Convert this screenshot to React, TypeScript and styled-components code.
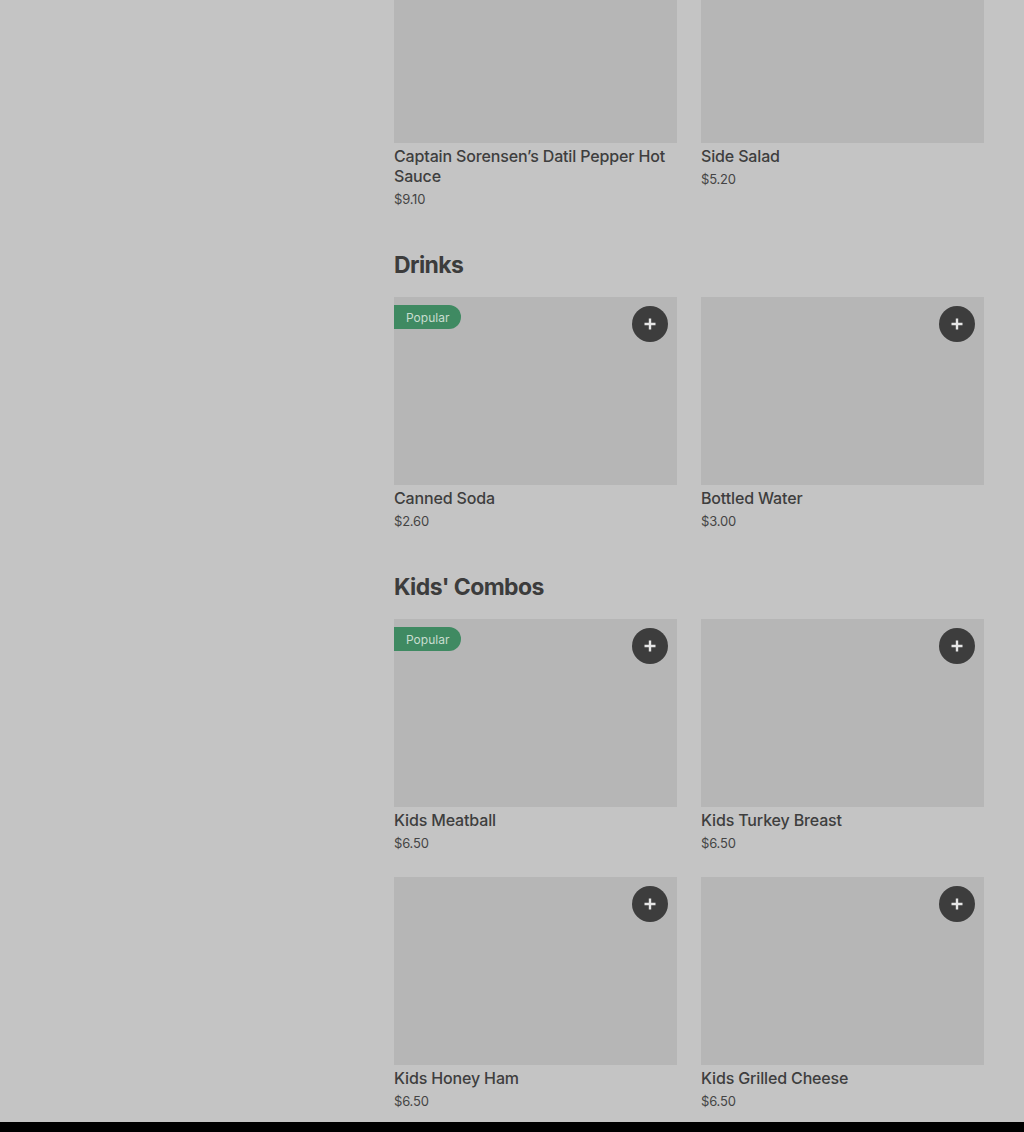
import React from "react";
import styled, { createGlobalStyle } from "styled-components";

const Global = createGlobalStyle`
  html, body { margin: 0; padding: 0; background: #c4c4c4; }
  body { font-family: Inter, "Noto Sans", "Liberation Sans", sans-serif; color: #3f3f3f; }
  * { box-sizing: border-box; }
`;

const Page = styled.div`
  width: 1024px;
  height: 1132px;
  overflow: hidden;
  background: #c4c4c4;
  display: flex;
  flex-direction: column;
`;

const Main = styled.main`
  flex: 1;
  overflow: hidden;
  padding: 0 40px 0 394px;
`;

const Scroll = styled.div`
  margin-top: -45px;
  display: flex;
  flex-direction: column;
`;

const Section = styled.section`
  display: flex;
  flex-direction: column;
  padding-bottom: 40px;
`;

const SectionTitle = styled.h2`
  margin: 0 0 16px;
  font-size: 23px;
  line-height: 32px;
  font-weight: 700;
  letter-spacing: -0.6px;
  color: #3c3c3c;
`;

const Grid = styled.div`
  display: grid;
  grid-template-columns: repeat(2, 283px);
  column-gap: 24px;
  row-gap: 24px;
`;

const Card = styled.div`
  display: flex;
  flex-direction: column;
`;

const Media = styled.div`
  position: relative;
  height: 188px;
  background: #b6b6b6;
`;

const Badge = styled.span`
  position: absolute;
  left: 0;
  top: 8px;
  height: 24px;
  padding: 0 12px;
  display: flex;
  align-items: center;
  background: #3f8a62;
  color: #c9ddd0;
  font-size: 12px;
  border-radius: 0 12px 12px 0;
`;

const AddButton = styled.button`
  position: absolute;
  right: 9px;
  top: 9px;
  width: 36px;
  height: 36px;
  border-radius: 50%;
  border: none;
  padding: 0;
  background: #3d3d3d;
  display: flex;
  align-items: center;
  justify-content: center;
  cursor: pointer;
`;

const Name = styled.div`
  margin-top: 3px;
  font-size: 16px;
  line-height: 20px;
  font-weight: 500;
  letter-spacing: -0.15px;
  color: #3e3e3e;
`;

const Price = styled.div`
  margin-top: 3px;
  font-size: 13px;
  line-height: 20px;
  color: #444;
  letter-spacing: -0.2px;
`;

const Footer = styled.footer`
  height: 10px;
  background: #000;
`;

type Item = { name: string; price: string; popular?: boolean };

const sections: { title?: string; items: Item[] }[] = [
  {
    items: [
      { name: "Captain Sorensen’s Datil Pepper Hot Sauce", price: "$9.10" },
      { name: "Side Salad", price: "$5.20" },
    ],
  },
  {
    title: "Drinks",
    items: [
      { name: "Canned Soda", price: "$2.60", popular: true },
      { name: "Bottled Water", price: "$3.00" },
    ],
  },
  {
    title: "Kids' Combos",
    items: [
      { name: "Kids Meatball", price: "$6.50", popular: true },
      { name: "Kids Turkey Breast", price: "$6.50" },
      { name: "Kids Honey Ham", price: "$6.50" },
      { name: "Kids Grilled Cheese", price: "$6.50" },
    ],
  },
];

const Plus = () => (
  <svg width="14" height="14" viewBox="0 0 14 14" fill="none">
    <path d="M7 1.5v11M1.5 7h11" stroke="#e6e6e6" strokeWidth="2.4" />
  </svg>
);

export default function App() {
  return (
    <Page>
      <Global />
      <Main>
        <Scroll>
          {sections.map((s, i) => (
            <Section key={i}>
              {s.title && <SectionTitle>{s.title}</SectionTitle>}
              <Grid>
                {s.items.map((it) => (
                  <Card key={it.name}>
                    <Media>
                      {it.popular && <Badge>Popular</Badge>}
                      <AddButton aria-label="Add">
                        <Plus />
                      </AddButton>
                    </Media>
                    <Name>{it.name}</Name>
                    <Price>{it.price}</Price>
                  </Card>
                ))}
              </Grid>
            </Section>
          ))}
        </Scroll>
      </Main>
      <Footer />
    </Page>
  );
}
